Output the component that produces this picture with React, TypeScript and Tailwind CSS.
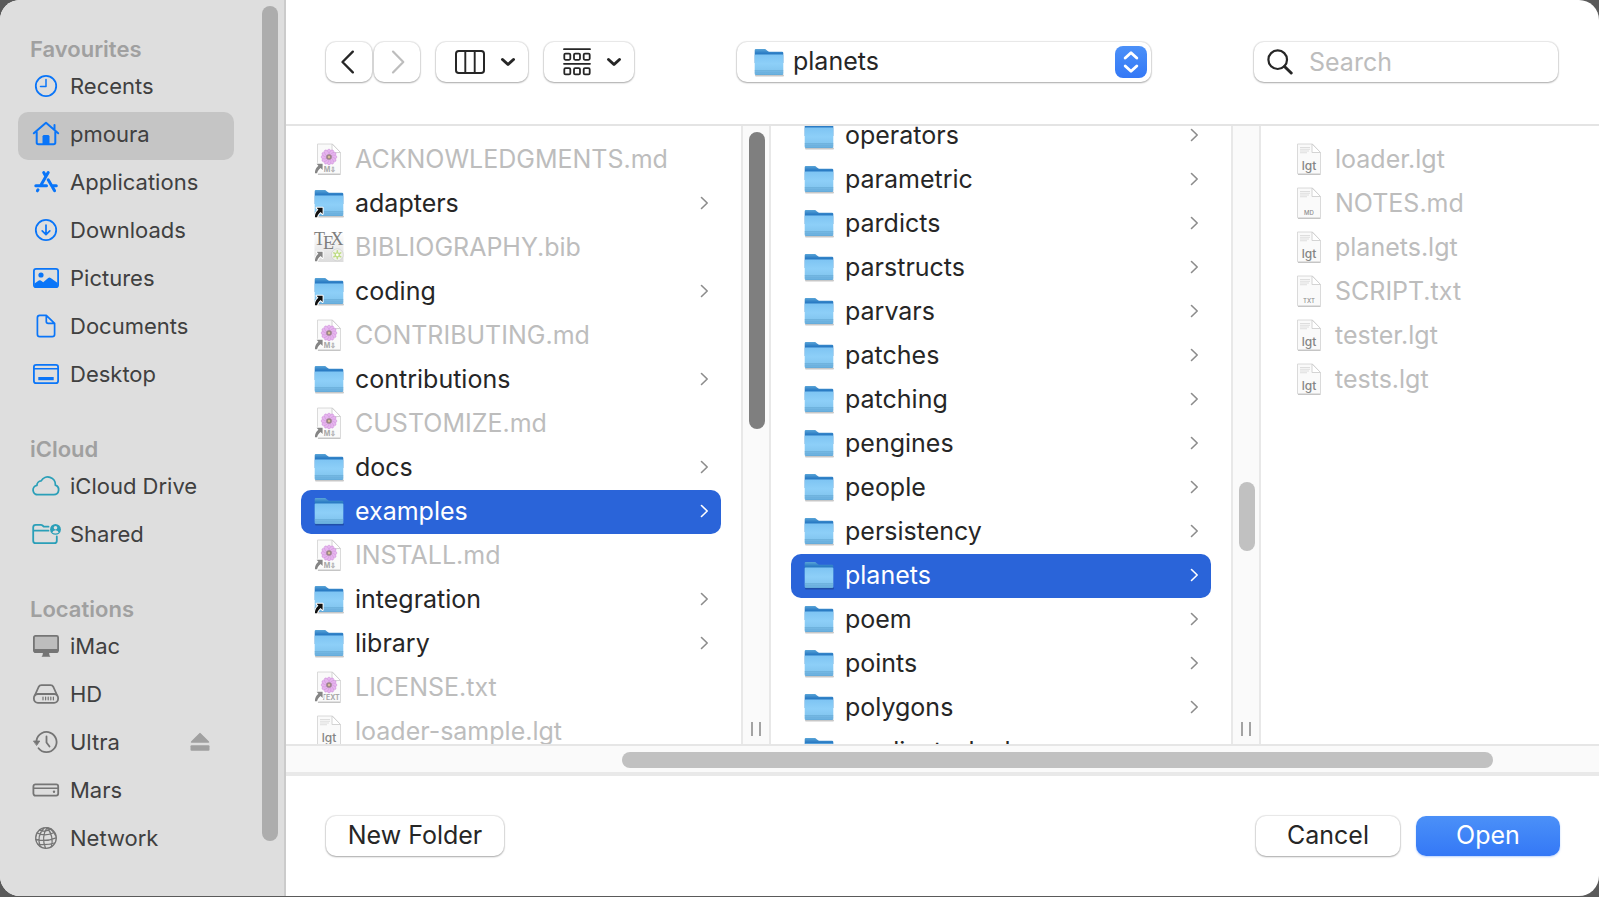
import type { ReactNode } from "react";

type Kind = "folder" | "alias" | "md-alias" | "text-alias" | "tex" | "lgt" | "md" | "txt";
type Entry = { name: string; kind: Kind; selected?: boolean };

const rootEntries: Entry[] = [
  { name: "ACKNOWLEDGMENTS.md", kind: "md-alias" },
  { name: "adapters", kind: "alias" },
  { name: "BIBLIOGRAPHY.bib", kind: "tex" },
  { name: "coding", kind: "alias" },
  { name: "CONTRIBUTING.md", kind: "md-alias" },
  { name: "contributions", kind: "folder" },
  { name: "CUSTOMIZE.md", kind: "md-alias" },
  { name: "docs", kind: "folder" },
  { name: "examples", kind: "folder", selected: true },
  { name: "INSTALL.md", kind: "md-alias" },
  { name: "integration", kind: "alias" },
  { name: "library", kind: "folder" },
  { name: "LICENSE.txt", kind: "text-alias" },
  { name: "loader-sample.lgt", kind: "lgt" },
];

const exampleEntries: Entry[] = [
  "operators",
  "parametric",
  "pardicts",
  "parstructs",
  "parvars",
  "patches",
  "patching",
  "pengines",
  "people",
  "persistency",
  "planets",
  "poem",
  "points",
  "polygons",
  "predicate_lookups",
].map((name) => ({ name, kind: "folder", selected: name === "planets" }));

const planetEntries: Entry[] = [
  { name: "loader.lgt", kind: "lgt" },
  { name: "NOTES.md", kind: "md" },
  { name: "planets.lgt", kind: "lgt" },
  { name: "SCRIPT.txt", kind: "txt" },
  { name: "tester.lgt", kind: "lgt" },
  { name: "tests.lgt", kind: "lgt" },
];

function FolderShape() {
  return (
    <>
      <defs>
        <linearGradient id="folder-back" x1="0" y1="0" x2="0" y2="1">
          <stop offset="0" stopColor="#5aa5d8" />
          <stop offset="0.3" stopColor="#2b7cc4" />
          <stop offset="1" stopColor="#2b7cc4" />
        </linearGradient>
        <linearGradient id="folder-front" x1="0" y1="0" x2="0" y2="1">
          <stop offset="0" stopColor="#7ec4f3" />
          <stop offset="0.45" stopColor="#8dcff8" />
          <stop offset="0.78" stopColor="#83c6f0" />
          <stop offset="1" stopColor="#62a9d8" />
        </linearGradient>
      </defs>
      <path d="M3 29.5h27" stroke="#000" strokeOpacity=".22" strokeWidth="2" strokeLinecap="round" />
      <path d="M1.700 4.200Q1.700 3 2.900 3h8.500c1 0 1.500.4 2.300 1.200l1 .9c.5.4 1 .6 1.700.6h12.600q1.300 0 1.300 1.300v10H1.700z" fill="url(#folder-back)" />
      <path d="M1.700 9.500q0-1 1-1h26.600q1 0 1 1v18.200q0 1.300-1.300 1.300H3q-1.300 0-1.300-1.300z" fill="url(#folder-front)" />
      <path d="M1.700 24.500h28.600M1.700 26h28.600" stroke="#5b9fcb" strokeWidth=".7" opacity=".7" />
    </>
  );
}

function AliasArrow({ faded }: { faded?: boolean }) {
  return (
    <path
      d="M3.600 20.800h6v6.200l-2-2c-2 1.600-3 3-3.500 5.300H1.900c0-3.200 1.200-5.700 3.500-7.600z"
      fill={faded ? "#858585" : "#111"}
      stroke="#fff"
      strokeWidth="2"
      paintOrder="stroke"
      strokeLinejoin="round"
    />
  );
}

function Page({ greek }: { greek?: boolean }) {
  return (
    <>
      <path d="M5 31.300h22.500" stroke="#000" strokeOpacity=".25" strokeWidth="1.400" />
      <path d="M4.500 1h15l8 8.500v21.300h-23z" fill="#fafafa" stroke="#d6d6d6" strokeWidth=".9" />
      {greek && <path d="M7 4.500h10M7 6.200h10M7 8h9M7 9.800h7" stroke="#dedede" strokeWidth="1.100" />}
      <path d="M19 1v8.500h8.500z" fill="#fff" stroke="#cfcfcf" strokeWidth=".9" strokeLinejoin="round" />
    </>
  );
}

const petals = [0, 30, 60, 90, 120, 150, 180, 210, 240, 270, 300, 330];

function FileIcon({ kind }: { kind: Kind }) {
  return (
    <svg viewBox="0 0 32 32" className="size-8 shrink-0" aria-hidden="true">
      {(kind === "folder" || kind === "alias") && <FolderShape />}
      {(kind === "md-alias" || kind === "text-alias") && (
        <>
          <Page />
          {petals.map((angle) => (
            <ellipse
              key={angle}
              cx="16"
              cy="9.600"
              rx="1.900"
              ry="3.600"
              fill="#e6b4ee"
              stroke="#cf93db"
              strokeWidth=".5"
              transform={`rotate(${angle} 16 14)`}
            />
          ))}
          <circle cx="16" cy="14" r="2.800" fill="#9a8488" />
          <circle cx="16" cy="14" r="1.200" fill="#d8c09a" />
          <text
            x={kind === "md-alias" ? 17 : 17.5}
            y="29"
            textAnchor="middle"
            className="fill-[#a8a8a8] text-[7px] font-bold"
          >
            {kind === "md-alias" ? "M⇩" : "TEXT"}
          </text>
        </>
      )}
      {kind === "tex" && (
        <>
          <defs>
            <linearGradient id="tex-paper" x1="0" y1="0" x2="0" y2="1">
              <stop offset="0" stopColor="#fff" />
              <stop offset="1" stopColor="#dcdcdc" />
            </linearGradient>
          </defs>
          <path d="M1.500 1h29v30h-29z" fill="url(#tex-paper)" />
          <g className="fill-[#7d7d7d] font-['Liberation_Serif',serif] text-[18px]">
            <text x="1" y="14">T</text>
            <text x="10" y="18">E</text>
            <text x="17.500" y="14">X</text>
          </g>
          <circle cx="24.300" cy="23.800" r="6" fill="#f1f2ec" stroke="#cfcfcf" strokeWidth=".7" />
          <path d="M24.300 19.800v8M20.800 21.800l7 4M27.800 21.800l-7 4" stroke="#bfdc84" strokeWidth="1.500" strokeLinecap="round" />
          <circle cx="24.300" cy="23.800" r="2" fill="#fff" stroke="#bfdc84" strokeWidth="1.200" />
        </>
      )}
      {(kind === "lgt" || kind === "md" || kind === "txt") && (
        <>
          <Page greek />
          <text
            x="16"
            y={kind === "lgt" ? 26.5 : 27.5}
            textAnchor="middle"
            className={kind === "lgt" ? "fill-[#858585] text-[12px] font-medium" : "fill-[#8f8f8f] text-[6px] font-medium"}
          >
            {kind === "lgt" ? "lgt" : kind.toUpperCase()}
          </text>
        </>
      )}
      {(kind === "alias" || kind === "md-alias" || kind === "text-alias" || kind === "tex") && (
        <AliasArrow faded={kind !== "alias"} />
      )}
    </svg>
  );
}

function Row({ entry }: { entry: Entry }) {
  const isFolder = entry.kind === "folder" || entry.kind === "alias";
  const tone = entry.selected ? "bg-[#2a64d9] text-white" : isFolder ? "text-[#262626]" : "text-[#bdbdbd]";
  return (
    <li>
      <button
        type="button"
        disabled={!isFolder}
        className={`flex h-11 w-full items-center gap-2.5 rounded-[10px] pr-3 pb-0.5 pl-3 text-left text-[25px] leading-8 ${tone}`}
      >
        <FileIcon kind={entry.kind} />
        <span className="flex-1 whitespace-nowrap">{entry.name}</span>
        {isFolder && (
          <svg viewBox="0 0 9 14" className="h-3.5 w-[9px] shrink-0" fill="none" aria-hidden="true">
            <path
              d="M1.500 1.500L7.200 7l-5.700 5.500"
              stroke={entry.selected ? "#fff" : "#8c8c8c"}
              strokeWidth="1.600"
              strokeLinecap="round"
              strokeLinejoin="round"
            />
          </svg>
        )}
      </button>
    </li>
  );
}

function ScrollTrack({ thumb }: { thumb: string }) {
  return (
    <div className="flex w-[30px] shrink-0 flex-col items-center border-x-2 border-[#e8e8e8] bg-[#fafafa] pb-2">
      <div className={`ml-0.5 w-4 rounded-full ${thumb}`} />
      <div className="mt-auto flex h-3.5 w-2.5 justify-between">
        <span className="w-0.5 bg-[#a3a3a3]" />
        <span className="w-0.5 bg-[#a3a3a3]" />
      </div>
    </div>
  );
}

const blue = "#0a75f8";
const teal = "#2a9fb8";
const gray = "#757575";

function SideIcon({ color, children }: { color: string; children: ReactNode }) {
  return (
    <svg
      viewBox="0 0 30 28"
      className="h-7 w-[30px] shrink-0"
      fill="none"
      stroke={color}
      strokeWidth="1.800"
      strokeLinecap="round"
      strokeLinejoin="round"
      aria-hidden="true"
    >
      {children}
    </svg>
  );
}

type Place = { name: string; icon: ReactNode; selected?: boolean; ejectable?: boolean };

const groups: { title: string; places: Place[] }[] = [
  {
    title: "Favourites",
    places: [
      {
        name: "Recents",
        icon: (
          <SideIcon color={blue}>
            <circle cx="15" cy="14" r="10.200" />
            <path d="M15 7.500V14.500H9.500" strokeWidth="1.500" />
          </SideIcon>
        ),
      },
      {
        name: "pmoura",
        selected: true,
        icon: (
          <SideIcon color={blue}>
            <path d="M2.800 13.300L15 2.800l12.200 10.500M5.700 12v10.500q0 1.700 1.700 1.700h15.200q1.700 0 1.700-1.700V12M23.500 5v4.500" strokeWidth="2" />
            <path d="M12 24v-7.800q0-.7.7-.7h4.600q.7 0 .7.700V24z" fill={blue} strokeWidth="1" />
          </SideIcon>
        ),
      },
      {
        name: "Applications",
        icon: (
          <SideIcon color={blue}>
            <path d="M17.200 4.500L10 17M12.700 4.500l1.800 3.200M17.200 11.800l6.400 11M4.800 17.700h10.700M20.800 17.700h4.500M7 21.800l-.6 1" strokeWidth="3" />
          </SideIcon>
        ),
      },
      {
        name: "Downloads",
        icon: (
          <SideIcon color={blue}>
            <circle cx="15" cy="14" r="10.200" />
            <path d="M15 9v9.500M11.200 14.800L15 18.600l3.800-3.800" strokeWidth="1.700" />
          </SideIcon>
        ),
      },
      {
        name: "Pictures",
        icon: (
          <SideIcon color={blue}>
            <rect x="2.900" y="4.900" width="24.200" height="18.200" rx="2.200" />
            <circle cx="10" cy="11" r="2.600" fill={blue} stroke="none" />
            <path d="M3.500 19.500l4.300-3q1-.7 2 0l2.400 1.800 5-4.200q1.200-1 2.500 0l7 5v3q0 1-1 1h-21q-1.200 0-1.200-1z" fill={blue} stroke="none" />
          </SideIcon>
        ),
      },
      {
        name: "Documents",
        icon: (
          <SideIcon color={blue}>
            <path d="M15.300 3.400H8.800Q6.400 3.400 6.400 5.800v16.400q0 2.400 2.400 2.400h12.400q2.400 0 2.400-2.400V11.300zM15.300 3.400v6q0 1.900 1.900 1.900h6.400" strokeWidth="1.700" />
          </SideIcon>
        ),
      },
      {
        name: "Desktop",
        icon: (
          <SideIcon color={blue}>
            <rect x="2.900" y="4.900" width="24.200" height="18.200" rx="2.200" />
            <path d="M3 8.700h24" strokeWidth="1.400" />
            <path d="M7.300 18.600h15.400" strokeWidth="3.200" strokeLinecap="butt" />
          </SideIcon>
        ),
      },
    ],
  },
  {
    title: "iCloud",
    places: [
      {
        name: "iCloud Drive",
        icon: (
          <SideIcon color={teal}>
            <path d="M7.200 22.700h15.600a4.900 4.900 0 0 0 1.600-9.500A7.600 7.600 0 0 0 10.200 8.900a4.600 4.600 0 0 0-4.300 4.500 4.700 4.700 0 0 0 1.300 9.300z" />
          </SideIcon>
        ),
      },
      {
        name: "Shared",
        icon: (
          <SideIcon color={teal}>
            <path d="M17.500 6.700H13l-1.800-1.500Q10.700 4.800 10 4.800H4.700Q2.200 4.800 2.200 7.300v13.400q0 2.500 2.500 2.500h18.600q2.500 0 2.500-2.500V16.500M2.500 10.700H17.500" />
            <circle cx="24.500" cy="9.400" r="5.400" fill={teal} stroke="none" />
            <circle cx="24.500" cy="7.700" r="1.800" fill="#dedede" stroke="none" />
            <path d="M21.300 12.700q.5-2.500 3.200-2.500t3.200 2.500q-3.200 1.600-6.400 0z" fill="#dedede" stroke="none" />
          </SideIcon>
        ),
      },
    ],
  },
  {
    title: "Locations",
    places: [
      {
        name: "iMac",
        icon: (
          <SideIcon color={gray}>
            <rect x="2.900" y="3.900" width="24.200" height="16.200" rx="1.500" fill="#bdbdbd" />
            <path d="M3 17h24v2.500q0 1.500-1.500 1.500h-21Q3 21 3 19.500zM12 20.500h6l.5 3q.8.300.8 1.300h-8.600q0-1 .8-1.300z" fill={gray} stroke="none" />
          </SideIcon>
        ),
      },
      {
        name: "HD",
        icon: (
          <SideIcon color={gray}>
            <path d="M3.800 15.500L7.600 7q.9-1.800 2.900-1.800h9q2 0 2.900 1.800l3.800 8.500" />
            <rect x="2.900" y="14" width="24.200" height="8.800" rx="4" />
            <path d="M12 17v2.800M14.600 17v2.800M17.200 17v2.800M19.800 17v2.800M22.400 17v2.800" strokeWidth="1.200" />
          </SideIcon>
        ),
      },
      {
        name: "Ultra",
        ejectable: true,
        icon: (
          <SideIcon color={gray}>
            <path d="M5.500 12.500A10.100 10.100 0 1 1 7.500 20.300" />
            <path d="M2.800 13h6l-3 4.200z" fill={gray} strokeWidth=".8" />
            <path d="M15.500 8.500V14.500l3 4" />
          </SideIcon>
        ),
      },
      {
        name: "Mars",
        icon: (
          <SideIcon color={gray}>
            <rect x="2.400" y="8.400" width="24.800" height="11.200" rx="2" />
            <path d="M3 12.300h24" strokeWidth="1.500" />
            <circle cx="23" cy="15.800" r="1.200" fill={gray} stroke="none" />
          </SideIcon>
        ),
      },
      {
        name: "Network",
        icon: (
          <SideIcon color={gray}>
            <g strokeWidth="1.300">
              <circle cx="15" cy="14" r="10.300" />
              <path d="M16 3.700Q10 13 14.500 24.300M13 4Q5.500 12 9 22.300M16 3.700q7 8 4.500 19M17 3.700q5.500 3 7.500 7.800M6 9q8 4 17.500-.5M4.800 15.500q10 2.500 20.300-1.700M7 20.300q9 1 16.500-1.300M8.500 5.800q6 3 11.500-1" />
            </g>
          </SideIcon>
        ),
      },
    ],
  },
];

function Sidebar() {
  return (
    <aside className="flex w-[286px] shrink-0 border-r-2 border-[#cbcbcb] bg-[#dedede]">
      <nav className="flex flex-1 flex-col gap-8 pt-8 pl-[18px]">
        {groups.map((group) => (
          <section key={group.title}>
            <h2 className="h-8 pt-px pl-3 text-[22px] leading-8 font-semibold text-[#a0a0a0]">{group.title}</h2>
            <ul>
              {group.places.map((place) => (
                <li
                  key={place.name}
                  className={`flex h-12 w-[216px] items-center rounded-[10px] pr-6 pb-1 pl-[13px] ${place.selected ? "bg-[#c5c5c5]" : ""}`}
                >
                  <a href="#" className="flex flex-1 items-center gap-[9px] text-[22px] leading-8 whitespace-nowrap text-[#404040]">
                    {place.icon}
                    {place.name}
                  </a>
                  {place.ejectable && (
                    <button type="button" aria-label={`Eject ${place.name}`}>
                      <svg viewBox="0 0 20 20" className="size-5" fill="#a0a0a0" aria-hidden="true">
                        <path d="M9.300 1.200q.7-.7 1.400 0l8.300 8.300q.8 1.300-.7 1.300H1.700q-1.500 0-.7-1.300z" />
                        <rect x=".5" y="13.300" width="19" height="5.400" rx="1" />
                      </svg>
                    </button>
                  )}
                </li>
              ))}
            </ul>
          </section>
        ))}
      </nav>
      <div className="mt-1.5 mr-1.5 mb-[55px] w-4 rounded-full bg-[#adadad]" />
    </aside>
  );
}

const raised = "bg-white shadow-[0_0_1px_1px_rgba(0,0,0,0.09),0_1px_2px_rgba(0,0,0,0.28)]";

function MenuChevron() {
  return (
    <svg viewBox="0 0 16 10" className="h-2.5 w-4" fill="none" aria-hidden="true">
      <path d="M2.500 2.500L8 7.500l5.500-5" stroke="#262626" strokeWidth="3" strokeLinecap="round" strokeLinejoin="round" />
    </svg>
  );
}

function Toolbar() {
  return (
    <header className="flex h-[126px] shrink-0 items-start justify-between border-b-2 border-[#e4e4e4] pt-[42px] pr-[41px] pl-10">
      <div className="flex gap-4">
        <div className="flex gap-0.5">
          <button type="button" aria-label="Back" className={`flex h-10 w-[46px] items-center justify-center rounded-[10px] ${raised}`}>
            <svg viewBox="0 0 16 24" className="h-6 w-4" fill="none" aria-hidden="true">
              <path d="M11.800 1.600L1.500 12l10.300 10.400" stroke="#262626" strokeWidth="2.300" strokeLinecap="round" strokeLinejoin="round" />
            </svg>
          </button>
          <button type="button" aria-label="Forward" disabled className={`flex h-10 w-[46px] items-center justify-center rounded-[10px] ${raised}`}>
            <svg viewBox="0 0 16 24" className="h-6 w-4" fill="none" aria-hidden="true">
              <path d="M4 1.600L14.300 12 4 22.400" stroke="#bdbdbd" strokeWidth="2.200" strokeLinecap="round" strokeLinejoin="round" />
            </svg>
          </button>
        </div>
        <button type="button" aria-label="View as columns" className={`flex h-10 w-[92px] items-center justify-between rounded-[10px] pr-3 pl-[19px] ${raised}`}>
          <svg viewBox="0 0 30 24" className="h-6 w-[30px]" fill="none" stroke="#262626" aria-hidden="true">
            <rect x="1" y="1" width="28" height="22" rx="2.800" strokeWidth="2" />
            <path d="M10.300 1v22M19.700 1v22" strokeWidth="1.900" />
          </svg>
          <MenuChevron />
        </button>
        <button type="button" aria-label="Group items" className={`flex h-10 w-[90px] items-center justify-between rounded-[10px] pr-3 pl-[19px] ${raised}`}>
          <svg viewBox="0 0 28 28" className="size-7" fill="none" stroke="#262626" aria-hidden="true">
            <path d="M1 1.200h26M1 15.800h26" strokeWidth="1.800" strokeLinecap="round" />
            <g strokeWidth="1.800">
              {[1.300, 11, 20.700].map((x) => (
                <g key={x}>
                  <rect x={x} y="5.600" width="6" height="6.200" rx="1.200" />
                  <rect x={x} y="20.200" width="6" height="6.200" rx="1.200" />
                </g>
              ))}
            </g>
          </svg>
          <MenuChevron />
        </button>
      </div>

      <div className={`relative h-10 w-[414px] rounded-[10px] ${raised}`}>
        <select
          aria-label="Current folder"
          className="h-10 w-full appearance-none rounded-[10px] bg-transparent pr-12 pb-0.5 pl-14 text-[25px] leading-8 text-[#262626]"
          defaultValue="planets"
        >
          <option>planets</option>
        </select>
        <div className="pointer-events-none absolute inset-y-0 left-4 flex items-center">
          <FileIcon kind="folder" />
        </div>
        <div className="pointer-events-none absolute inset-y-1 right-1 flex w-8 items-center justify-center rounded-lg bg-linear-to-b from-[#4b90f8] to-[#3478f6]">
          <svg viewBox="0 0 16 24" className="h-6 w-4" fill="none" aria-hidden="true">
            <path
              d="M2.200 8L8 2.700 13.800 8M2.200 16L8 21.300 13.800 16"
              stroke="#fff"
              strokeWidth="2.900"
              strokeLinecap="round"
              strokeLinejoin="round"
            />
          </svg>
        </div>
      </div>

      <label className={`flex h-10 w-[304px] items-center gap-4 rounded-[10px] pl-[13px] ${raised}`}>
        <svg viewBox="0 0 26 26" className="size-[26px] shrink-0" fill="none" stroke="#262626" aria-hidden="true">
          <circle cx="10.700" cy="10.700" r="9.300" strokeWidth="2.200" />
          <path d="M17.500 17.500l6.700 6.500" strokeWidth="3" strokeLinecap="round" />
        </svg>
        <input
          type="text"
          aria-label="Search"
          placeholder="Search"
          className="min-w-0 flex-1 bg-transparent text-[25px] leading-8 outline-none placeholder:text-[#bdbdbd]"
        />
      </label>
    </header>
  );
}

function Columns() {
  return (
    <div className="flex min-h-0 flex-1 overflow-hidden">
      <div className="flex w-[485px] shrink-0">
        <ul className="flex-1 overflow-hidden pt-3 pr-5 pl-[15px]">
          {rootEntries.map((entry) => (
            <Row key={entry.name} entry={entry} />
          ))}
        </ul>
        <ScrollTrack thumb="mt-1.5 h-[297px] bg-[#7f7f7f]" />
      </div>
      <div className="flex w-[490px] shrink-0">
        <ul className="flex flex-1 flex-col overflow-hidden px-5">
          <li className="-mt-3" aria-hidden="true" />
          {exampleEntries.map((entry) => (
            <Row key={entry.name} entry={entry} />
          ))}
        </ul>
        <ScrollTrack thumb="mt-[356px] h-[69px] bg-[#c1c1c1]" />
      </div>
      <ul className="flex-1 overflow-hidden pt-3 pl-5">
        {planetEntries.map((entry) => (
          <Row key={entry.name} entry={entry} />
        ))}
      </ul>
    </div>
  );
}

export default function App() {
  return (
    <div className="h-screen bg-[#5a5a5a] pb-px font-['Inter','Liberation_Sans',sans-serif]">
      <div className="flex h-full overflow-hidden rounded-[20px] bg-white">
        <Sidebar />
        <main className="flex min-w-0 flex-1 flex-col">
          <Toolbar />
          <Columns />
          <div className="h-8 shrink-0 border-t-2 border-b-4 border-t-[#e6e6e6] border-b-[#e9e9e9] bg-[#fafafa] pt-1.5">
            <div className="ml-[25.6%] h-4 w-[66.3%] rounded-full bg-[#c1c1c1]" />
          </div>
          <footer className="flex h-[120px] shrink-0 items-center gap-4 pr-[39px] pl-10 text-[25px] leading-8 text-[#262626]">
            <button type="button" className={`mr-auto h-10 w-[178px] rounded-[10px] pb-0.5 ${raised}`}>
              New Folder
            </button>
            <button type="button" className={`h-10 w-36 rounded-[10px] pb-0.5 ${raised}`}>
              Cancel
            </button>
            <button
              type="button"
              className="h-10 w-36 rounded-[10px] bg-linear-to-b from-[#4b90f8] to-[#3478f6] pb-0.5 text-white shadow-[0_1px_2px_rgba(52,120,246,0.35)]"
            >
              Open
            </button>
          </footer>
        </main>
      </div>
    </div>
  );
}
